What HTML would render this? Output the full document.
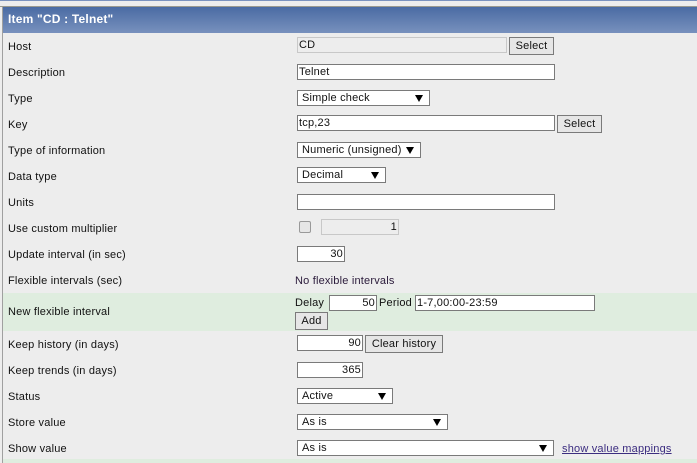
<!DOCTYPE html>
<html><head><style>
*{box-sizing:border-box}
body{margin:0;width:697px;height:463px;background:#ededed;font-family:"Liberation Sans",sans-serif;font-size:11px;letter-spacing:0.2px;color:#111;position:relative;overflow:hidden}
.a{position:absolute}
.lbl{position:absolute;left:8px;line-height:14px;margin-top:1px}
.in{position:absolute;background:#fff;border:1px solid #7a7a7a;height:16px;line-height:15px;padding:0 1px;font-size:11px;white-space:nowrap;overflow:hidden}
.dis{background:#ededed;border-color:#c8c8c8}
.r{text-align:right}
.btn{position:absolute;background:#e6e6e6;border:1px solid #7a7a7a;height:18px;line-height:17px;text-align:center;font-size:11px}
.sel{position:absolute;background:#fff;border:1px solid #7a7a7a;height:16px;line-height:15px;padding-left:4px;font-size:11px}
.sel:after{content:"";position:absolute;right:6px;top:4px;border-left:4px solid transparent;border-right:4px solid transparent;border-top:7px solid #000}
</style></head><body>
<div class="a" style="left:0;top:0;width:697px;height:1px;background:#7b93bf"></div>
<div class="a" style="left:0;top:6px;width:697px;height:1px;background:#9a9a90"></div>
<div class="a" style="left:2px;top:7px;width:1px;height:456px;background:#a0a0a0"></div>
<div class="a" style="left:3px;top:7px;width:694px;height:26px;background:linear-gradient(#4a6ba3,#7891bd);color:#fff;font-weight:bold;font-size:12px;line-height:25px;padding-left:5px">Item "CD : Telnet"</div>
<div class="a" style="left:3px;top:293px;width:694px;height:38px;background:#dfeddf"></div>
<div class="a" style="left:3px;top:459px;width:694px;height:4px;background:#dfeddf"></div>

<div class="lbl" style="top:39px">Host</div>
<div class="lbl" style="top:65px">Description</div>
<div class="lbl" style="top:91px">Type</div>
<div class="lbl" style="top:117px">Key</div>
<div class="lbl" style="top:143px">Type of information</div>
<div class="lbl" style="top:169px">Data type</div>
<div class="lbl" style="top:195px">Units</div>
<div class="lbl" style="top:221px">Use custom multiplier</div>
<div class="lbl" style="top:247px">Update interval (in sec)</div>
<div class="lbl" style="top:273px">Flexible intervals (sec)</div>
<div class="lbl" style="top:304px">New flexible interval</div>
<div class="lbl" style="top:337px">Keep history (in days)</div>
<div class="lbl" style="top:363px">Keep trends (in days)</div>
<div class="lbl" style="top:389px">Status</div>
<div class="lbl" style="top:415px">Store value</div>
<div class="lbl" style="top:441px">Show value</div>

<div class="in dis" style="left:297px;top:37px;width:210px">CD</div>
<div class="btn" style="left:509px;top:37px;width:45px">Select</div>
<div class="in" style="left:297px;top:64px;width:258px">Telnet</div>
<div class="sel" style="left:297px;top:90px;width:133px">Simple check</div>
<div class="in" style="left:297px;top:115px;width:258px">tcp,23</div>
<div class="btn" style="left:557px;top:115px;width:45px">Select</div>
<div class="sel" style="left:297px;top:142px;width:124px">Numeric (unsigned)</div>
<div class="sel" style="left:297px;top:167px;width:89px">Decimal</div>
<div class="in" style="left:297px;top:194px;width:258px"></div>
<div class="a" style="left:299px;top:221px;width:12px;height:12px;border:1px solid #999;border-radius:2px;background:#e6e6e6"></div>
<div class="in dis r" style="left:321px;top:219px;width:78px">1</div>
<div class="in r" style="left:297px;top:246px;width:48px">30</div>
<div class="a" style="left:295px;top:274px;line-height:14px;color:#2a1a3a">No flexible intervals</div>
<div class="a" style="left:295px;top:296px;line-height:14px">Delay</div>
<div class="in r" style="left:329px;top:295px;width:48px">50</div>
<div class="a" style="left:379px;top:296px;line-height:14px">Period</div>
<div class="in" style="left:415px;top:295px;width:180px">1-7,00:00-23:59</div>
<div class="btn" style="left:295px;top:312px;width:33px">Add</div>
<div class="in r" style="left:297px;top:335px;width:66px">90</div>
<div class="btn" style="left:365px;top:335px;width:78px">Clear history</div>
<div class="in r" style="left:297px;top:362px;width:66px">365</div>
<div class="sel" style="left:297px;top:388px;width:96px">Active</div>
<div class="sel" style="left:297px;top:414px;width:151px">As is</div>
<div class="sel" style="left:297px;top:440px;width:257px">As is</div>
<div class="a" style="left:562px;top:442px;line-height:14px;color:#3c2d80;text-decoration:underline">show value mappings</div>
</body></html>
